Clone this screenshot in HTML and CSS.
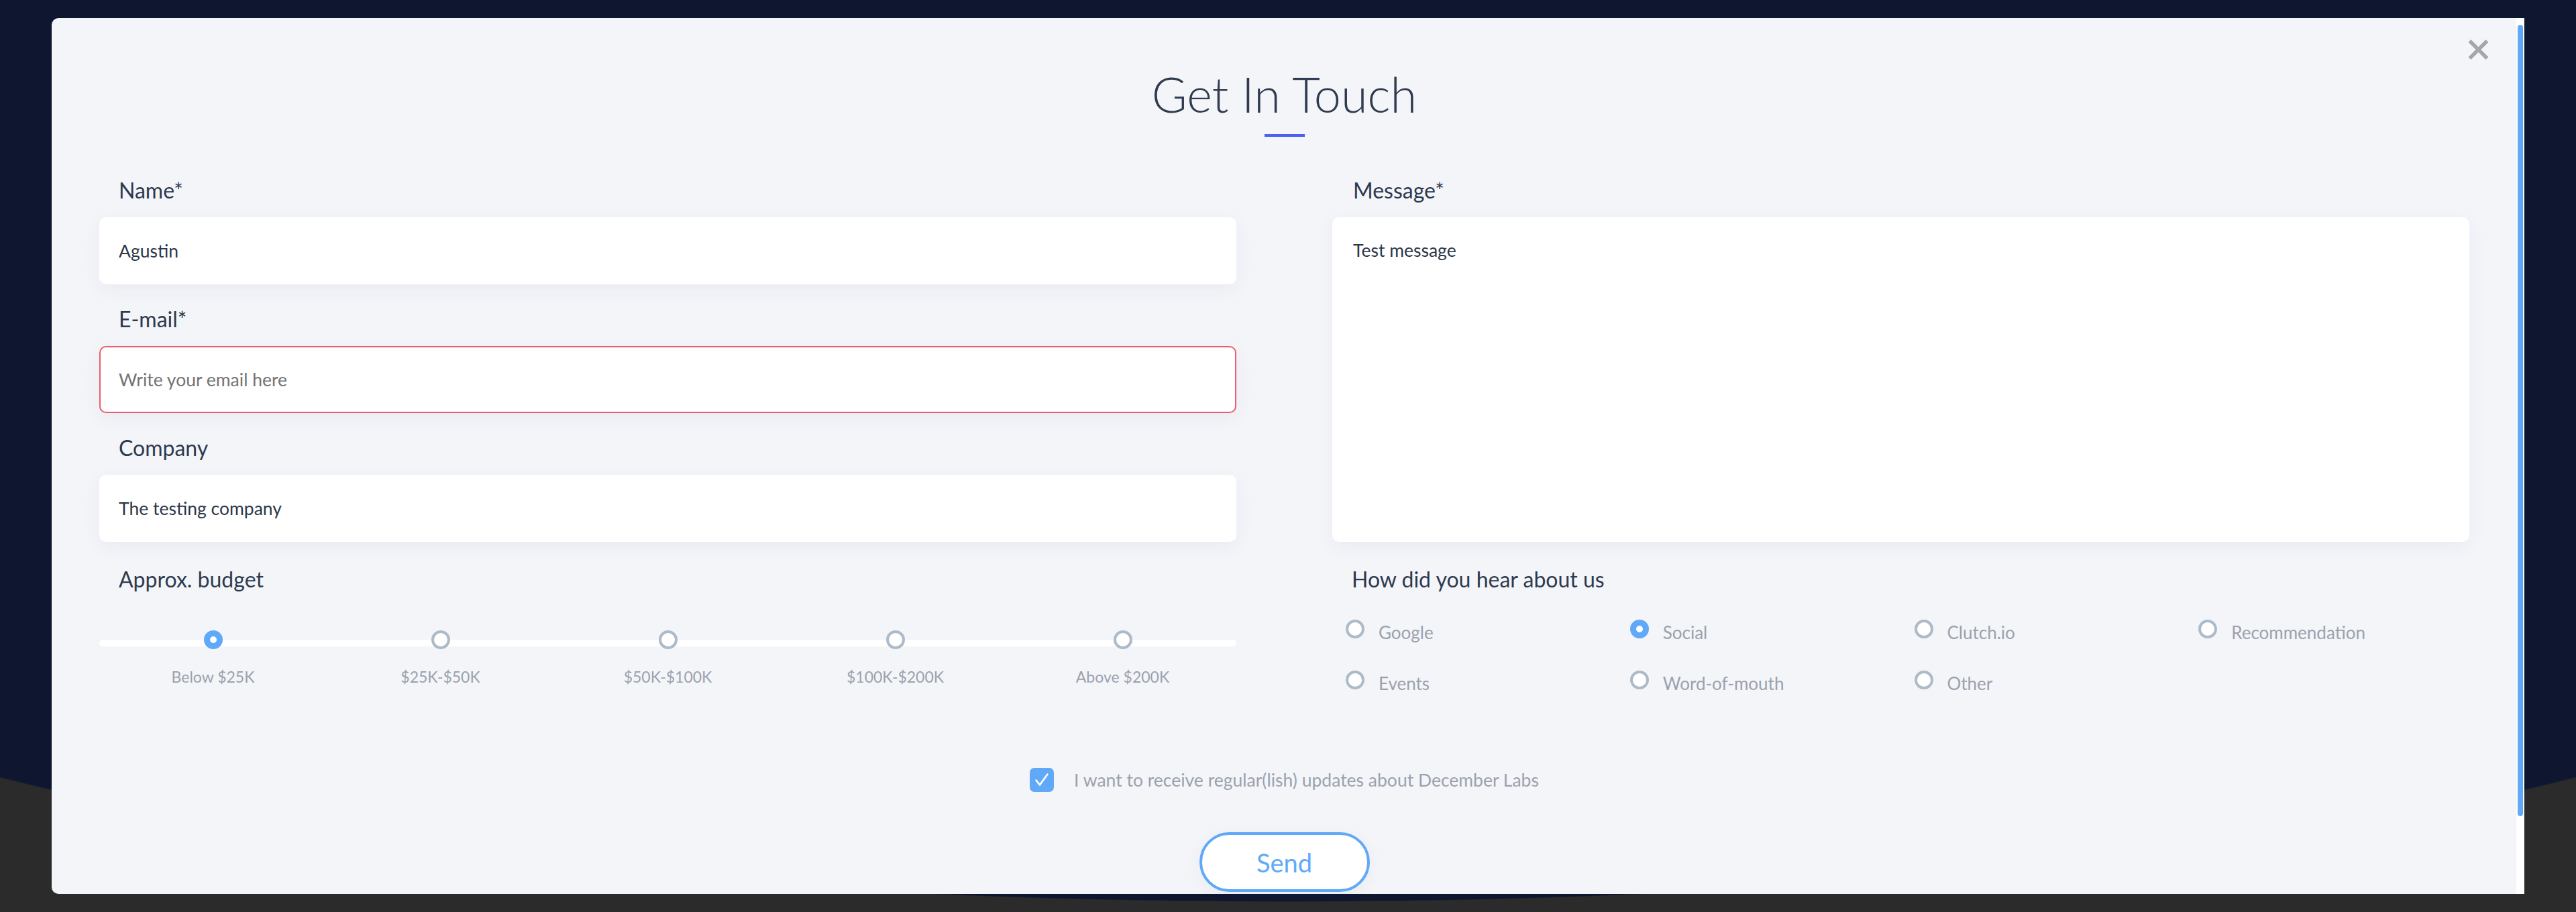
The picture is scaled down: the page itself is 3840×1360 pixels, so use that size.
FILE: index.html
```html
<!DOCTYPE html>
<html lang="en">
<head>
<meta charset="utf-8">
<title>Get In Touch</title>
<link rel="stylesheet" href="styles.css">
</head>
<body>
<div class="modal">
  <div class="modal-body">
    <header class="head">
      <h1 class="title">Get In Touch</h1>
      <div class="title-bar"></div>
    </header>

    <div class="grid">
      <div class="col">
        <div class="field">
          <label class="label">Name*</label>
          <input class="input" type="text" value="Agustin">
        </div>
        <div class="field">
          <label class="label">E-mail*</label>
          <input class="input input-error" type="text" placeholder="Write your email here">
        </div>
        <div class="field">
          <label class="label">Company</label>
          <input class="input" type="text" value="The testing company">
        </div>
      </div>

      <div class="field field-grow">
        <label class="label">Message*</label>
        <textarea class="textarea">Test message</textarea>
      </div>

      <div class="budget">
        <div class="label">Approx. budget</div>
        <div class="slider">
          <div class="step"><span class="dot dot-on"></span><span class="step-label">Below $25K</span></div>
          <div class="step"><span class="dot"></span><span class="step-label">$25K-$50K</span></div>
          <div class="step"><span class="dot"></span><span class="step-label">$50K-$100K</span></div>
          <div class="step"><span class="dot"></span><span class="step-label">$100K-$200K</span></div>
          <div class="step"><span class="dot"></span><span class="step-label">Above $200K</span></div>
        </div>
      </div>

      <div class="hear">
        <div class="label">How did you hear about us</div>
        <div class="options">
          <div class="option"><span class="dot"></span><span class="opt-label">Google</span></div>
          <div class="option"><span class="dot dot-on"></span><span class="opt-label">Social</span></div>
          <div class="option"><span class="dot"></span><span class="opt-label">Clutch.io</span></div>
          <div class="option"><span class="dot"></span><span class="opt-label">Recommendation</span></div>
          <div class="option"><span class="dot"></span><span class="opt-label">Events</span></div>
          <div class="option"><span class="dot"></span><span class="opt-label">Word-of-mouth</span></div>
          <div class="option"><span class="dot"></span><span class="opt-label">Other</span></div>
        </div>
      </div>
    </div>

    <div class="consent">
      <span class="checkbox">
        <svg width="24" height="24" viewBox="0 0 24 24"><path d="M3.5 12.5 L9 19.5 L20.5 3.5" fill="none" stroke="#ffffff" stroke-width="2.6" stroke-linecap="round" stroke-linejoin="round"/></svg>
      </span>
      <span class="consent-text">I want to receive regular(lish) updates about December Labs</span>
    </div>

    <div class="actions">
      <button class="send" type="button">Send</button>
    </div>
  </div>

  <div class="scrollbar"><div class="thumb"></div></div>

  <button class="close" type="button" aria-label="Close">
    <svg width="31" height="30" viewBox="0 0 31 30"><path d="M2.5 2 L28.5 28 M28.5 2 L2.5 28" stroke="#a6a6a6" stroke-width="5.5" fill="none"/></svg>
  </button>
</div>
</body>
</html>
```
FILE: styles.css
```css
html, body {
  height: 100%;
}

body {
  margin: 0;
  padding: 27px 0 0 77px;
  box-sizing: border-box;
  overflow: hidden;
  font-family: Lato, "Noto Sans", sans-serif;
  background:
    radial-gradient(ellipse 2400px 462px at 50% 883px, #0e1630 99.7%, rgba(14, 22, 48, 0) 100%) no-repeat,
    linear-gradient(#0e1630, #0e1630) top left / 100% 883px no-repeat,
    #2b2b2b;
}

.modal {
  position: relative;
  width: 3686px;
  height: 1306px;
  display: flex;
  background: #f4f5f9;
  border-radius: 10px 0 0 10px;
  overflow: hidden;
}

.modal-body {
  flex: 1;
  padding: 79px 70px 0 71px;
  overflow: hidden;
}

.scrollbar {
  width: 12px;
  background: #ffffff;
  padding-top: 10px;
  box-sizing: border-box;
}

.thumb {
  width: 8px;
  margin-left: 2px;
  height: 1180px;
  border-radius: 4px;
  background: #60a9f8;
}

.close {
  position: absolute;
  top: 32px;
  right: 53px;
  width: 31px;
  height: 30px;
  padding: 0;
  border: 0;
  background: none;
  display: flex;
}

/* header */
.head {
  display: flex;
  flex-direction: column;
  align-items: center;
}

.title {
  margin: 0;
  font-size: 72px;
  line-height: 68px;
  font-weight: 300;
  color: #2f3b4f;
}

.title-bar {
  width: 60px;
  height: 4px;
  margin-top: 26px;
  background: #4b5ff2;
}

/* grid */
.grid {
  margin-top: 60px;
  display: grid;
  grid-template-columns: 1fr 1fr;
  column-gap: 143px;
  row-gap: 36px;
}

.col {
  display: flex;
  flex-direction: column;
  gap: 32px;
}

.field {
  display: flex;
  flex-direction: column;
}

.label {
  display: block;
  padding-left: 29px;
  font-size: 32px;
  line-height: 40px;
  color: #2d3a4f;
}

.field .label {
  margin-bottom: 20px;
}

.input,
.textarea {
  box-sizing: border-box;
  width: 100%;
  border: 0;
  border-radius: 10px;
  background: #ffffff;
  box-shadow: 0 8px 28px rgba(40, 50, 90, 0.05);
  font-family: inherit;
  font-size: 26.5px;
  color: #2d3748;
  outline: none;
}

.input {
  height: 100px;
  padding: 0 29px;
}

.input::placeholder {
  color: #737373;
  opacity: 1;
}

.input-error {
  border: 2px solid #e85e70;
  padding: 0 27px;
}

.field-grow .label {
  padding-left: 31px;
}

.textarea {
  flex: 1;
  resize: none;
  padding: 34px 31px;
  line-height: 1.2;
}

/* budget slider */
.slider {
  position: relative;
  margin-top: 56px;
  display: grid;
  grid-template-columns: repeat(5, 1fr);
}

.slider::before {
  content: "";
  position: absolute;
  left: 0;
  right: 0;
  top: 14px;
  height: 10px;
  border-radius: 5px;
  background: #ffffff;
}

.step {
  display: flex;
  flex-direction: column;
  align-items: center;
}

.dot {
  position: relative;
  box-sizing: border-box;
  width: 28px;
  height: 28px;
  border-radius: 50%;
  border: 4px solid #adbac9;
  background: #ffffff;
  flex: none;
}

.dot-on {
  border: 9px solid #60a9f8;
}

.step-label {
  margin-top: 26px;
  font-size: 23px;
  line-height: 30px;
  color: #9aa2ad;
}

/* hear options */
.options {
  margin-top: 40px;
  display: grid;
  grid-template-columns: repeat(4, 1fr);
  row-gap: 48px;
}

.option {
  display: flex;
  align-items: center;
  gap: 21px;
  padding-left: 20px;
  height: 28px;
}

.opt-label {
  font-size: 26px;
  line-height: 28px;
  padding-top: 10px;
  color: #9aa2ad;
}

/* consent */
.consent {
  margin-top: 117px;
  display: flex;
  align-items: center;
  justify-content: center;
  gap: 30px;
}

.checkbox {
  width: 36px;
  height: 36px;
  border-radius: 7px;
  background: #60a9f8;
  display: flex;
  align-items: center;
  justify-content: center;
}

.consent-text {
  font-size: 26.5px;
  line-height: 36px;
  color: #9aa2ad;
}

/* send */
.actions {
  margin-top: 60px;
  display: flex;
  justify-content: center;
}

.send {
  box-sizing: border-box;
  width: 254px;
  height: 89px;
  border: 4px solid #60a9f8;
  border-radius: 45px;
  background: #ffffff;
  box-shadow: 0 6px 24px rgba(40, 50, 90, 0.05);
  font-family: inherit;
  font-size: 38px;
  color: #60a9f8;
  padding: 0;
}
```
